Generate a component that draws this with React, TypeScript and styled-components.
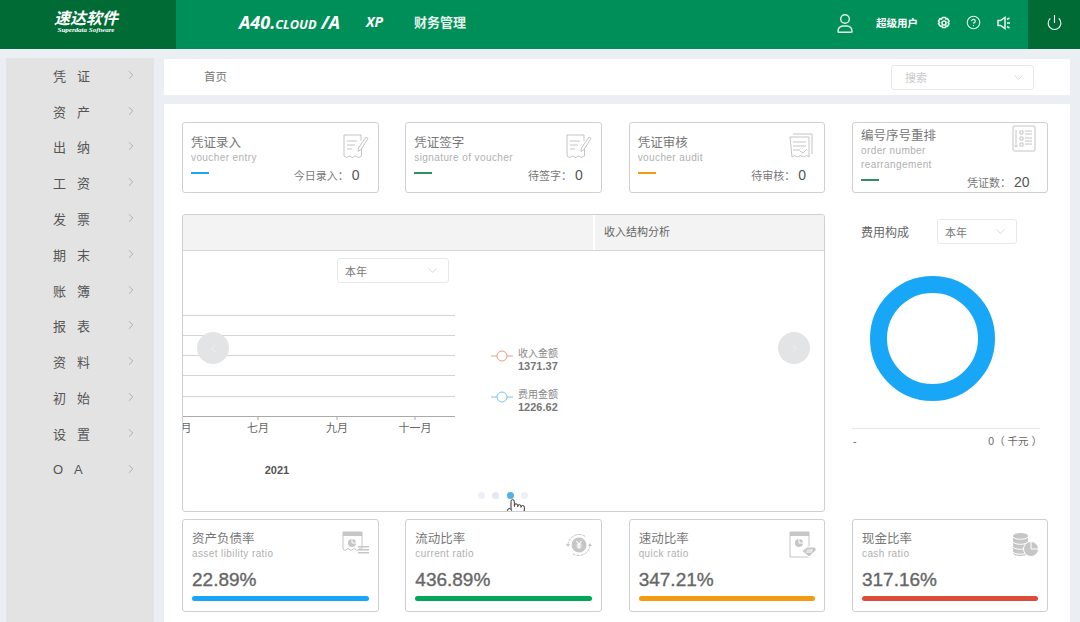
import styled, { createGlobalStyle } from "styled-components";
import { ChevronDown, ChevronLeft, ChevronRight, CircleHelp, Pointer, Power } from "lucide-react";

const CN = `"Liberation Sans", "Noto Sans CJK SC", sans-serif`;

const Global = createGlobalStyle`
  html, body { margin: 0; padding: 0; background: #ebeef3; }
  body { font-family: ${CN}; color: #666; }
  * { box-sizing: border-box; }
`;

const Page = styled.div`
  width: 1080px;
  height: 622px;
  overflow: hidden;
`;

const Header = styled.header`
  display: flex;
  align-items: center;
  height: 49px;
  background: #008f58;
  color: #fff;
`;

const LogoBox = styled.div`
  width: 176px;
  height: 49px;
  background: #006b34;
  display: flex;
  flex-direction: column;
  align-items: center;
  padding-top: 11px;
  padding-right: 4px;
`;

const LogoCn = styled.div`
  font-size: 16px;
  line-height: 16px;
  font-weight: 700;
  font-style: italic;
`;

const LogoEn = styled.div`
  font-family: "Liberation Serif", serif;
  font-size: 7px;
  line-height: 7px;
  font-weight: 700;
  font-style: italic;
  white-space: nowrap;
`;

const HeaderNav = styled.nav`
  display: flex;
  align-items: center;
  padding-bottom: 6px;
`;

const Product = styled.div`
  margin-left: 63px;
  font-family: "Open Sans", sans-serif;
  font-style: italic;
  font-weight: 700;
  font-size: 18px;
  width: 127px;
  white-space: nowrap;
  span { font-size: 12.800px; }
`;

const Xp = styled.div`
  font-family: "Open Sans", sans-serif;
  font-style: italic;
  font-weight: 700;
  font-size: 14px;
  width: 48px;
`;

const Module = styled.div`
  font-size: 13px;
  font-weight: 700;
  color: #e4f3ec;
`;

const HeaderRight = styled.div`
  margin-left: auto;
  display: flex;
  align-items: center;
  height: 100%;
`;

const HeaderTools = styled.div`
  display: flex;
  align-items: center;
  padding-bottom: 4px;
`;

const UserName = styled.div`
  font-size: 10.500px;
  font-weight: 700;
  margin-left: 22px;
  margin-right: 18px;
  white-space: nowrap;
`;

const HeaderIcon = styled.div`
  width: 15px;
  height: 15px;
  display: flex;
  align-items: center;
  justify-content: center;
  margin-right: 15px;
  color: #e8f5ef;
`;

const PowerBox = styled.div`
  width: 52px;
  height: 49px;
  margin-left: 2px;
  background: #006b34;
  display: flex;
  align-items: center;
  justify-content: center;
  padding-bottom: 4px;
  color: #fff;
`;

const Body = styled.div`
  display: flex;
  padding: 9px 10px 0 6px;
  gap: 10px;
`;

const Sidebar = styled.aside`
  width: 148px;
  height: 564px;
  background: #e3e3e3;
`;

const MenuItem = styled.div`
  height: 35.800px;
  display: flex;
  align-items: center;
  padding-left: 47px;
  padding-bottom: 1px;
  font-size: 13px;
  color: #555;
`;

const MenuLabel = styled.span`
  width: 70px;
  letter-spacing: 11px;
  white-space: nowrap;
`;

const MenuArrow = styled(ChevronRight)`
  color: #888;
  margin-left: 1px;
  margin-top: -1px;
`;

const Main = styled.main`
  width: 906px;
  margin-top: 1px;
  display: flex;
  flex-direction: column;
  gap: 9px;
`;

const Crumb = styled.div`
  height: 36px;
  background: #fff;
  display: flex;
  align-items: center;
  justify-content: space-between;
  padding: 0 36px 0 40px;
`;

const CrumbText = styled.span`
  font-size: 11.500px;
  color: #777;
  margin-top: -2px;
`;

const Select = styled.div<{ $w: number }>`
  width: ${(p) => p.$w}px;
  height: 25px;
  border: 1px solid #e6e8ee;
  border-radius: 3px;
  background: #fff;
  display: flex;
  align-items: center;
  justify-content: space-between;
  padding: 0 8px 0 7px;
  font-size: 11px;
  color: #777;
  svg { color: #c4c4c4; }
`;

const SearchSelect = styled(Select)`
  padding-left: 13px;
  padding-right: 7px;
  color: #c8c8c8;
`;

const Content = styled.section`
  height: 518px;
  background: #fff;
  padding: 18px 21px 0 18px;
`;

const CardRow = styled.div`
  display: grid;
  grid-template-columns: repeat(4, 196.500px);
  column-gap: 26.830px;
`;

const Card = styled.div<{ $h: number; $top: number; $left: number }>`
  position: relative;
  height: ${(p) => p.$h}px;
  border: 1px solid #cfcfcf;
  border-radius: 3px;
  padding: ${(p) => p.$top}px 9px 0 ${(p) => p.$left}px;
`;

const CardTitle = styled.div`
  font-size: 12.500px;
  line-height: 15px;
  color: #777;
`;

const CardSub = styled.div`
  font-size: 10px;
  line-height: 14px;
  letter-spacing: 0.400px;
  color: #b0b0b0;
`;

const CardFoot = styled.div`
  display: flex;
  align-items: center;
  justify-content: space-between;
  padding-right: 9px;
  height: 16px;
  margin-top: 2px;
`;

const Dash = styled.i<{ $c: string }>`
  display: block;
  width: 18px;
  height: 1.500px;
  background: ${(p) => p.$c};
  margin-top: -4px;
`;

const Count = styled.div`
  font-size: 11px;
  color: #777;
  b {
    font-weight: 400;
    font-size: 14px;
    color: #555;
    margin-left: 3px;
  }
`;

const CardIcon = styled.svg<{ $top: number; $right: number }>`
  position: absolute;
  top: ${(p) => p.$top}px;
  right: ${(p) => p.$right}px;
  width: 28px;
  height: 28px;
  fill: none;
  stroke: #c4c4c4;
  stroke-width: 1;
`;

const Middle = styled.div`
  display: grid;
  grid-template-columns: 643px 197px;
  column-gap: 27px;
  margin: 21px 0 7px;
  height: 298px;
`;

const ChartPanel = styled.div`
  position: relative;
  border: 1px solid #cfcfcf;
  border-radius: 3px;
  overflow: hidden;
`;

const Tabs = styled.div`
  height: 36px;
  display: flex;
  background: #f3f3f3;
  border-bottom: 1px solid #d6d6d6;
`;

const TabBlank = styled.div`
  width: 412px;
  border-right: 2px solid #fff;
`;

const Tab = styled.div`
  padding-left: 9px;
  font-size: 11px;
  line-height: 35px;
  color: #666;
`;

const ChartBody = styled.div`
  padding-top: 7px;
`;

const ChartSelect = styled(Select)`
  margin-left: 154px;
`;

const ChartRow = styled.div`
  display: flex;
  margin-top: 22px;
`;

const Legend = styled.div`
  margin: 41.500px 0 0 36px;
  display: flex;
  flex-direction: column;
  gap: 15px;
`;

const LegendItem = styled.div`
  display: flex;
  align-items: flex-start;
  gap: 5px;
  svg { margin-top: 3px; }
`;

const LegendText = styled.div`
  font-size: 10px;
  line-height: 13px;
  color: #888;
  b {
    display: block;
    font-size: 11px;
    color: #777;
  }
`;

const NavButton = styled.div<{ $side: "left" | "right" }>`
  position: absolute;
  top: 117px;
  ${(p) => (p.$side === "left" ? "left: 14px;" : "right: 14px;")}
  width: 32px;
  height: 32px;
  border-radius: 50%;
  background: #e3e4e6;
  color: #fff;
  display: flex;
  align-items: center;
  justify-content: center;
`;

const Dots = styled.div`
  position: absolute;
  left: 295px;
  bottom: 12px;
  display: flex;
  gap: 7.300px;
`;

const Dot = styled.i<{ $c: string }>`
  width: 7px;
  height: 7px;
  border-radius: 50%;
  background: ${(p) => p.$c};
`;

const Hand = styled(Pointer)`
  position: absolute;
  left: 323px;
  top: 283px;
  fill: #fff;
  color: #333;
`;

const Aside = styled.div`
  display: flex;
  flex-direction: column;
`;

const AsideHead = styled.div`
  display: flex;
  align-items: center;
  height: 25px;
  margin-top: 5px;
  padding-left: 9px;
  font-size: 12px;
  color: #666;
`;

const AsideSelect = styled(Select)`
  margin-left: 28px;
`;

const Donut = styled.div`
  width: 125px;
  height: 125px;
  margin: 32px 0 0 18px;
  border-radius: 50%;
  border: 17.500px solid #18a7f7;
`;

const AsideFoot = styled.div`
  width: 188px;
  margin-top: 27px;
  border-top: 1px solid #e4e6ea;
  display: flex;
  justify-content: space-between;
  padding: 5px 1px 0;
  font-size: 10.500px;
  line-height: 14px;
  color: #666;
`;

const AsideAmount = styled.span`
  margin-right: -3px;
  white-space: pre;
`;

const RatioValue = styled.div`
  font-size: 19px;
  line-height: 24px;
  margin-top: 7px;
  color: #666;
  -webkit-text-stroke: 0.350px #666;
`;

const Bar = styled.div<{ $c: string }>`
  height: 5px;
  border-radius: 3px;
  background: ${(p) => p.$c};
  margin-top: 4px;
`;

const menu = ["凭证", "资产", "出纳", "工资", "发票", "期末", "账簿", "报表", "资料", "初始", "设置", "OA"];

function Receipt({ kind }: { kind: string }) {
  if (kind === "entry") {
    return (
      <CardIcon viewBox="0 0 28 28" $top={10} $right={9}>
        <path d="M3 2h17v6M3 2v21l2.500 1.500 3-1.500 3 1.500 3-1.500 3 1.500 3-1.500v-7" />
        <path d="M6 8h10M6 12h8M6 16h5" />
        <path d="M25 4l2 1.500-7 11-3 2 .5-3.500z" />
      </CardIcon>
    );
  }
  if (kind === "audit") {
    return (
      <CardIcon viewBox="0 0 28 28" $top={10} $right={9}>
        <path d="M6 1h19v20M3 4h19v20l-2.500-1.500-3 1.500-3-1.500-3 1.500-3-1.500-2.500 1.500z" />
        <path d="M6 9h13M6 13h13M6 17h7M13 18l3 2 4-4" />
      </CardIcon>
    );
  }
  return (
    <CardIcon viewBox="0 0 28 28" $top={2} $right={9}>
      <rect x="3" y="1" width="22" height="25" rx="1" />
      <path d="M6 5v17M4.500 20.500L6 22l1.500-1.500M10 6h3v3h-3zM10 12h3v3h-3zM10 18h3v3h-3zM15 6h7M15 9h7M15 13h7M15 16h7M15 19h7" />
    </CardIcon>
  );
}

function RatioIcon({ kind }: { kind: string }) {
  const solid = { fill: "#c6c6c6", stroke: "none" };
  if (kind === "asset") {
    return (
      <CardIcon viewBox="0 0 28 28" $top={11} $right={8}>
        <path d="M1 1h19v18l-2-1.500-3 2-3-2-3 2-3-2-3 2-2-1.500z" />
        <path d="M1 1h19v4H1z" style={solid} />
        <circle cx="10" cy="12" r="4" style={solid} />
        <path d="M10 12V7.500M10 12h5" stroke="#fff" />
        <path d="M16 15h11v1.500H16zM16 18h11v1.500H16zM16 21h11v1.500H16z" style={solid} />
      </CardIcon>
    );
  }
  if (kind === "current") {
    return (
      <CardIcon viewBox="0 0 28 28" $top={11} $right={8}>
        <path d="M3 14a11 11 0 0 1 18-8M25 14a11 11 0 0 1-18 8" strokeDasharray="3 1" />
        <path d="M1 13h4l-2 3zM23 15h4l-2-3z" style={solid} />
        <circle cx="14" cy="14" r="7.500" style={solid} />
        <path d="M11.500 10l2.500 3.500 2.500-3.500M14 13.500V18M11.500 14h5M11.500 16h5" stroke="#fff" strokeWidth="1.200" />
      </CardIcon>
    );
  }
  if (kind === "quick") {
    return (
      <CardIcon viewBox="0 0 28 28" $top={11} $right={7}>
        <path d="M1 1h19v25H1z" />
        <path d="M1 1h19v4H1z" style={solid} />
        <circle cx="10" cy="12" r="4" style={solid} />
        <path d="M10 12V7.500M10 12h5" stroke="#fff" />
        <path d="M13 20l5-4h8l1.500 3-7.500 7z" fill="#c6c6c6" stroke="#fff" />
        <path d="M18 19h6M17 21h6" stroke="#fff" />
      </CardIcon>
    );
  }
  return (
    <CardIcon viewBox="0 0 28 28" $top={11} $right={8}>
      <path d="M2 5c0-4 15-4 15 0v17c0 4-15 4-15 0z" style={solid} />
      <path d="M2 6c2 3 13 3 15 0M2 11c2 3 13 3 15 0M2 16c2 3 13 3 15 0M2 21c2 3 13 3 15 0" stroke="#fff" />
      <circle cx="20" cy="18" r="7.500" fill="#c6c6c6" stroke="#fff" />
      <path d="M20 11v7h7" stroke="#fff" />
    </CardIcon>
  );
}

const topCards = [
  { title: "凭证录入", sub: ["voucher entry"], label: "今日录入：", n: "0", c: "#18a7f7", icon: "entry" },
  { title: "凭证签字", sub: ["signature of voucher"], label: "待签字：", n: "0", c: "#2f8f63", icon: "entry" },
  { title: "凭证审核", sub: ["voucher audit"], label: "待审核：", n: "0", c: "#f39c12", icon: "audit" },
  { title: "编号序号重排", sub: ["order number", "rearrangement"], label: "凭证数：", n: "20", c: "#2f8f63", icon: "order" },
];

const ratios = [
  { title: "资产负债率", sub: "asset libility ratio", v: "22.89%", c: "#18a7f7", icon: "asset" },
  { title: "流动比率", sub: "current ratio", v: "436.89%", c: "#00a65a", icon: "current" },
  { title: "速动比率", sub: "quick ratio", v: "347.21%", c: "#f39c12", icon: "quick" },
  { title: "现金比率", sub: "cash ratio", v: "317.16%", c: "#dd4b39", icon: "cash" },
];

const months = [
  { x: 3, t: "月" },
  { x: 75, t: "七月" },
  { x: 154, t: "九月" },
  { x: 232, t: "十一月" },
];

function Plot() {
  return (
    <svg width="272" height="175" viewBox="0 0 272 175">
      {[0, 20, 40, 60, 81].map((y) => (
        <line key={y} x1="0" x2="272" y1={y + 10.5} y2={y + 10.5} stroke="#d4d4d4" />
      ))}
      <line x1="0" x2="272" y1="111.500" y2="111.500" stroke="#aaa" />
      {[75, 154, 232].map((x) => (
        <line key={x} x1={x} x2={x} y1="112" y2="115" stroke="#aaa" />
      ))}
      {months.map((m) => (
        <text key={m.t} x={m.x} y="127" fontSize="11" fill="#666" textAnchor="middle">
          {m.t}
        </text>
      ))}
      <text x="94" y="169" fontSize="11" fontWeight="700" fill="#555" textAnchor="middle">
        2021
      </text>
    </svg>
  );
}

function LegendMark({ c }: { c: string }) {
  return (
    <svg width="22" height="12" viewBox="0 0 22 12" fill="#fff" stroke={c}>
      <path d="M0 6h22" />
      <circle cx="11" cy="6" r="5" />
    </svg>
  );
}

export default function App() {
  return (
    <Page>
      <Global />
      <Header>
        <LogoBox>
          <LogoCn>速达软件</LogoCn>
          <LogoEn>Superdata Software</LogoEn>
        </LogoBox>
        <HeaderNav>
          <Product>
            A40.<span>CLOUD</span> /A
          </Product>
          <Xp>XP</Xp>
          <Module>财务管理</Module>
        </HeaderNav>
        <HeaderRight>
          <HeaderTools>
            <svg width="18" height="20" viewBox="0 0 18 20" fill="none" stroke="#dff1e9" strokeWidth="1.400">
              <circle cx="9" cy="6" r="4.300" />
              <path d="M2 18.500c0-3 2-5 4.500-5.500h5c2.500.5 4.500 2.500 4.500 5.500 0 .5-.5.8-1 .8H3c-.5 0-1-.3-1-.8z" />
            </svg>
            <UserName>超级用户</UserName>
            <HeaderIcon>
              <svg width="14" height="14" viewBox="0 0 14 14" fill="none" stroke="#e8f5ef" strokeWidth="1.600">
                <circle cx="7" cy="7" r="2" />
                <path d="M5.500 1.500h3l.5 1.500 1.500-.3 1.500 2.500-1 1.300 1 1.300-1.500 2.500-1.500-.3-.5 1.500h-3l-.5-1.500-1.500.3L1.500 7.800l1-1.300-1-1.300L3 2.700l1.500.3z" />
              </svg>
            </HeaderIcon>
            <HeaderIcon>
              <CircleHelp size={15} strokeWidth={1.800} />
            </HeaderIcon>
            <HeaderIcon>
              <svg width="14" height="14" viewBox="0 0 14 14" fill="none" stroke="#e8f5ef" strokeWidth="1.500">
                <path d="M1 4.500h2.500L8 1.500v11L3.500 9.500H1z" />
                <path d="M10 3.500l2.500-1.500M10 7h3M10 10.500l2.500 1.500" />
              </svg>
            </HeaderIcon>
          </HeaderTools>
          <PowerBox>
            <Power size={17} strokeWidth={1.500} />
          </PowerBox>
        </HeaderRight>
      </Header>
      <Body>
        <Sidebar>
          {menu.map((m) => (
            <MenuItem key={m}>
              <MenuLabel>{m}</MenuLabel>
              <MenuArrow size={14} strokeWidth={1} />
            </MenuItem>
          ))}
        </Sidebar>
        <Main>
          <Crumb>
            <CrumbText>首页</CrumbText>
            <SearchSelect $w={143}>
              搜索
              <ChevronDown size={15} strokeWidth={1} />
            </SearchSelect>
          </Crumb>
          <Content>
            <CardRow>
              {topCards.map((c) => (
                <Card key={c.title} $h={71} $top={c.sub.length > 1 ? 6 : 13} $left={8}>
                  <CardTitle>{c.title}</CardTitle>
                  {c.sub.map((s) => (
                    <CardSub key={s}>{s}</CardSub>
                  ))}
                  <CardFoot>
                    <Dash $c={c.c} />
                    <Count>
                      {c.label}
                      <b>{c.n}</b>
                    </Count>
                  </CardFoot>
                  <Receipt kind={c.icon} />
                </Card>
              ))}
            </CardRow>
            <Middle>
              <ChartPanel>
                <Tabs>
                  <TabBlank />
                  <Tab>收入结构分析</Tab>
                </Tabs>
                <ChartBody>
                  <ChartSelect $w={112}>
                    本年
                    <ChevronDown size={15} strokeWidth={1} />
                  </ChartSelect>
                  <ChartRow>
                    <Plot />
                    <Legend>
                      <LegendItem>
                        <LegendMark c="#ee9a7a" />
                        <LegendText>
                          收入金额
                          <b>1371.37</b>
                        </LegendText>
                      </LegendItem>
                      <LegendItem>
                        <LegendMark c="#7cc6f2" />
                        <LegendText>
                          费用金额
                          <b>1226.62</b>
                        </LegendText>
                      </LegendItem>
                    </Legend>
                  </ChartRow>
                </ChartBody>
                <NavButton $side="left">
                  <ChevronLeft size={13} strokeWidth={1} />
                </NavButton>
                <NavButton $side="right">
                  <ChevronRight size={13} strokeWidth={1} />
                </NavButton>
                <Dots>
                  <Dot $c="#eef0f4" />
                  <Dot $c="#e3e8f0" />
                  <Dot $c="#4fb3e8" />
                  <Dot $c="#eef0f4" />
                </Dots>
                <Hand size={20} strokeWidth={1.200} />
              </ChartPanel>
              <Aside>
                <AsideHead>
                  费用构成
                  <AsideSelect $w={80}>
                    本年
                    <ChevronDown size={15} strokeWidth={1} />
                  </AsideSelect>
                </AsideHead>
                <Donut />
                <AsideFoot>
                  <span>-</span>
                  <AsideAmount>0（ 千元 ）</AsideAmount>
                </AsideFoot>
              </Aside>
            </Middle>
            <CardRow>
              {ratios.map((r) => (
                <Card key={r.title} $h={93} $top={12} $left={9}>
                  <CardTitle>{r.title}</CardTitle>
                  <CardSub>{r.sub}</CardSub>
                  <RatioValue>{r.v}</RatioValue>
                  <Bar $c={r.c} />
                  <RatioIcon kind={r.icon} />
                </Card>
              ))}
            </CardRow>
          </Content>
        </Main>
      </Body>
    </Page>
  );
}
